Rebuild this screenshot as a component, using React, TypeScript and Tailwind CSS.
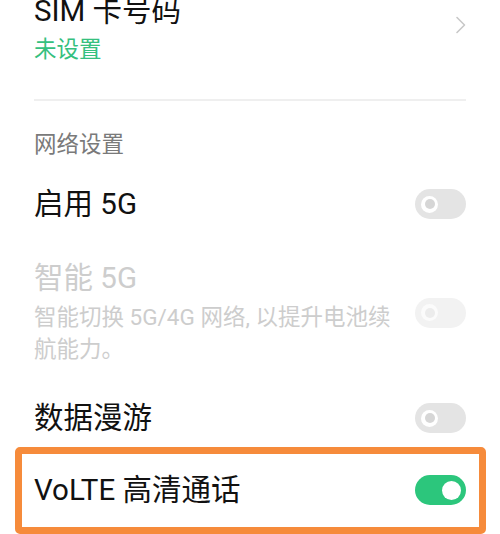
import React from 'react';

type ToggleState = 'on' | 'off' | 'disabled';

function Toggle({ state }: { state: ToggleState }) {
  if (state === 'on') {
    return (
      <div className="flex h-[30px] w-[51px] shrink-0 items-center justify-end rounded-full bg-[#2cc67c] pr-[5px]">
        <div className="h-[19px] w-[19px] rounded-full bg-white" />
      </div>
    );
  }
  const disabled = state === 'disabled';
  return (
    <div
      className={
        disabled
          ? 'flex h-[30px] w-[51px] shrink-0 items-center rounded-full bg-[#f2f2f2] pl-[6px]'
          : 'flex h-[30px] w-[51px] shrink-0 items-center rounded-full bg-[#e4e4e4] pl-[6px]'
      }
    >
      <div
        className={
          disabled
            ? 'flex h-[17px] w-[17px] items-center justify-center rounded-full bg-[#fbfbfb]'
            : 'flex h-[17px] w-[17px] items-center justify-center rounded-full bg-white'
        }
      >
        <div className={disabled ? 'h-[10px] w-[10px] rounded-full bg-[#ececec]' : 'h-[10px] w-[10px] rounded-full bg-[#d6d6d6]'} />
      </div>
    </div>
  );
}

export default function App() {
  return (
    <div
      className="relative h-[534px] w-[500px] overflow-hidden bg-white"
      style={{ fontFamily: 'Roboto, "Noto Sans CJK SC", sans-serif' }}
    >
      <div className="px-[34px]">
        {/* SIM number row, scrolled partly off the top */}
        <div className="-mt-[6px] flex items-center justify-between">
          <div>
            <div className="text-[29.5px] leading-[34px] text-[#111]">SIM 卡号码</div>
            <div className="mt-[6px] text-[22.5px] leading-[30px] text-[#35c07e]">未设置</div>
          </div>
          <svg width="12" height="18" viewBox="0 0 12 18" className="mb-[8px] mr-[-1px]">
            <path d="M2 1.5 L9.5 9 L2 16.5" fill="none" stroke="#c8c8c8" strokeWidth="1.6" strokeLinecap="round" strokeLinejoin="round" />
          </svg>
        </div>

        <div className="mt-[35px] h-[2px] bg-[#efefef]" />

        {/* Section header */}
        <div className="mt-[28px] text-[22.5px] leading-[30px] text-[#7a7a7a]">网络设置</div>

        <div className="flex h-[90px] items-center justify-between">
          <div className="text-[29.5px] leading-[36px] text-[#111]">启用 5G</div>
          <Toggle state="off" />
        </div>

        <div className="flex items-center justify-between pb-[15px] pt-[11px]">
          <div className="w-[374px]">
            <div className="text-[29.5px] leading-[36px] text-[#cdcdcd]">智能 5G</div>
            <div className="mt-[5px] text-[22.5px] leading-[32px] text-[#cdcdcd]">
              智能切换 5G/4G 网络, 以提升电池续航能力。
            </div>
          </div>
          <Toggle state="disabled" />
        </div>

        <div className="flex h-[76px] items-center justify-between">
          <div className="text-[29.5px] leading-[36px] text-[#111]">数据漫游</div>
          <Toggle state="off" />
        </div>

        <div className="flex h-[68px] items-center justify-between">
          <div className="text-[29.5px] leading-[36px] text-[#111]">VoLTE 高清通话</div>
          <Toggle state="on" />
        </div>
      </div>

      {/* highlight annotation */}
      <div className="absolute left-[15px] top-[447px] h-[87px] w-[471px] rounded-[5px] border-[7px] border-[#f68b3b]" />
    </div>
  );
}
